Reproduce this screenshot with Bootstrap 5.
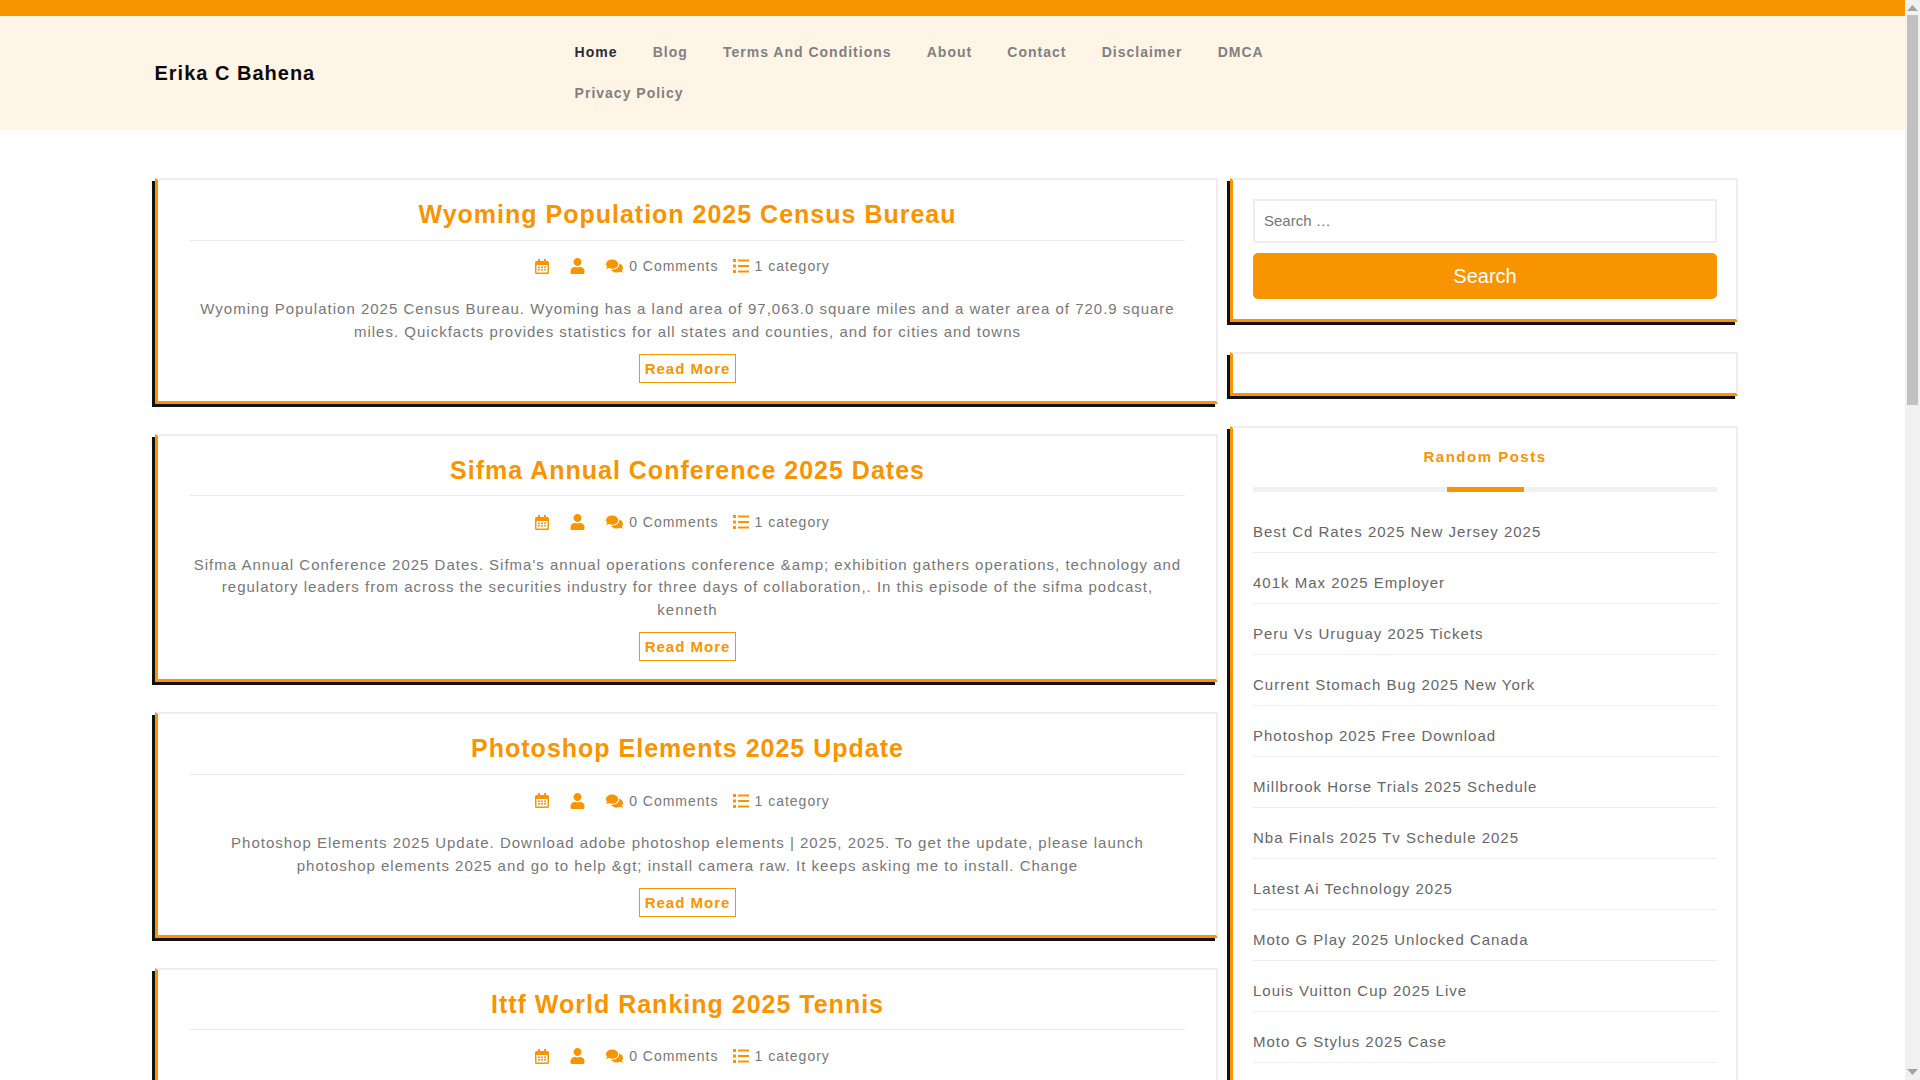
<!DOCTYPE html>
<html lang="en">
<head>
<meta charset="utf-8">
<title>Erika C Bahena</title>
<link rel="stylesheet" href="https://cdn.jsdelivr.net/npm/bootstrap@5.3.0/dist/css/bootstrap.min.css">
<style>
body{font-family:"Liberation Sans",Arial,sans-serif;font-size:15px;letter-spacing:1px;color:#777;background:#fff;line-height:1.5}
.topstrip{height:16px;background:#f79400}
.headband{background:#fef5e7;height:114px;padding-left:154.5px}
.sitename{width:402.5px;font-size:20px;font-weight:700;color:#0b0b0b;letter-spacing:1px}
.sitenav{width:800px}
.sitenav a{display:block;padding:0 17.6px;line-height:41px;font-size:14px;font-weight:700;color:#808080;text-decoration:none}
.sitenav a.now{color:#2b2b3a}
.pagewrap{padding:48px 182px 0 152px;gap:9px}
.maincol{width:1066px;flex:none}
.sidecol{flex:1 1 auto;min-width:0}
.boxed{position:relative;margin-left:3px;margin-bottom:30px;background:#fff;border:2px solid #eee;border-left:3px solid #f79400;border-bottom:3px solid #f79400;box-shadow:-3px 3px 0 #111}
.postbox{padding:16px 31px 18px 32px;text-align:center}
.posttitle{margin:0;padding-bottom:6.8px;border-bottom:1px solid #e9e9e9;font-size:25px;line-height:36.8px;font-weight:700;color:#f79400;letter-spacing:1px}
.metaline{margin-top:14.9px;padding-right:10px;height:22px;font-size:14px;line-height:22px;color:#777}
.metaline svg{display:block;fill:#f79400;flex:none}
.metaline .spread{margin-left:21px}
.metaline .tight{margin-left:6px}
.metaline .wide{margin-left:15px}
.metaline .wide + .tight{margin-left:5px}
.postcopy{margin:20.6px 0 0;line-height:22.5px}
.readbtn{display:inline-block;vertical-align:top;margin-top:10.7px;height:29px;line-height:27px;padding:0 5px;border:1px solid #f79400;color:#f79400;font-weight:700;text-decoration:none}
.searchbox{padding:19px 19px 20px 20px;margin-bottom:30px}
.searchfield{display:block;width:100%;height:44px;border:2px solid #eee;padding:0 9px 2px;font:15px "Liberation Sans",Arial,sans-serif;letter-spacing:0;color:#777;background:#fff;border-radius:0}
.searchfield::placeholder{color:#757575;opacity:1}
.searchgo{display:block;width:100%;height:46px;margin-top:10px;border:0;border-radius:5px;background:#f79400;color:#fff;font-size:20px;letter-spacing:0}
.emptybox{height:44px}
.listbox{padding:0 19px 30px 20px}
.sidehead{margin:0;padding-top:17px;text-align:center;font-size:15px;line-height:24px;font-weight:700;color:#f79400;letter-spacing:1.5px}
.headbar{height:5px;margin-top:18px;background:#f1f1f1}
.headbar span{display:block;width:77px;height:5px;margin:0 auto;background:#f79400}
.postlinks{list-style:none;margin:10px 0 0;padding:0}
.postlinks li{height:51px;padding-top:18px;border-bottom:1px solid #eee;line-height:24px;color:#666}
.postlinks a{color:inherit;text-decoration:none}
.fakebar{position:fixed;top:0;right:0;bottom:0;width:15px;background:#f1f1f1;z-index:10}
.fakebar .thumbbar{position:absolute;top:15px;left:2px;width:11px;height:390px;background:#c1c1c1}
.fakebar svg{position:absolute;left:2px;width:11px;height:6px;fill:#a3a3a3}
.fakebar .arrowup{top:5px}
.fakebar .arrowdown{bottom:5px}
</style>
</head>
<body>
<svg width="0" height="0" class="position-absolute" aria-hidden="true">
  <symbol id="ic-cal" viewBox="0 0 14 15"><path fill-rule="evenodd" d="M3 0h2v2h4V0h2v2h1.500A1.500 1.500 0 0 1 14 3.500V13.500A1.500 1.500 0 0 1 12.500 15h-11A1.500 1.500 0 0 1 0 13.500V3.500A1.500 1.500 0 0 1 1.500 2H3zM1.500 6v7.500h11V6zM3 7.500h2v1.500H3zM6 7.500h2v1.500H6zM9 7.500h2v1.500H9zM3 10h2v1.500H3zM6 10h2v1.500H6zM9 10h2v1.500H9z"/></symbol>
  <symbol id="ic-user" viewBox="0 0 448 512"><path d="M224 256c70.700 0 128-57.300 128-128S294.700 0 224 0 96 57.300 96 128s57.300 128 128 128zm89.600 32h-16.700c-22.200 10.200-46.900 16-72.900 16s-50.600-5.800-72.900-16h-16.700C60.200 288 0 348.200 0 422.400V464c0 26.500 21.500 48 48 48h352c26.500 0 48-21.500 48-48v-41.600c0-74.200-60.200-134.400-134.400-134.400z"/></symbol>
  <symbol id="ic-chat" viewBox="0 0 576 512"><path d="M416 192c0-88.400-93.100-160-208-160S0 103.600 0 192c0 34.300 14.100 65.900 38 92-13.400 30.200-35.500 54.200-35.800 54.500-2.200 2.300-2.800 5.700-1.500 8.700S4.800 352 8 352c36.600 0 66.900-12.300 88.700-25 32.200 15.700 70.300 25 111.300 25 114.900 0 208-71.600 208-160zm122 220c23.900-26 38-57.700 38-92 0-66.900-53.500-124.200-129.300-148.100.9 6.600 1.300 13.300 1.300 20.100 0 105.900-107.700 192-240 192-10.800 0-21.300-.8-31.700-1.900C207.800 439.600 281.800 480 368 480c41 0 79.100-9.200 111.300-25 21.800 12.700 52.100 25 88.700 25 3.200 0 6.100-1.900 7.300-4.800 1.300-2.900.7-6.300-1.500-8.700-.3-.3-22.400-24.200-35.800-54.500z"/></symbol>
  <symbol id="ic-list" viewBox="0 0 16 14"><path d="M0 0h3v3H0zM5 .5h11v2H5zM0 5.500h3v3H0zM5 6h11v2H5zM0 11h3v3H0zM5 11.500h11v2H5z"/></symbol>
</svg>
<div class="topstrip"></div>
<header class="headband d-flex align-items-center">
  <div class="sitename">Erika C Bahena</div>
  <nav class="sitenav d-flex flex-wrap">
    <a class="now" href="#">Home</a><a href="#">Blog</a><a href="#">Terms And Conditions</a><a href="#">About</a><a href="#">Contact</a><a href="#">Disclaimer</a><a href="#">DMCA</a><a href="#">Privacy Policy</a>
  </nav>
</header>
<div class="pagewrap d-flex align-items-start">
  <main class="maincol">

    <article class="boxed postbox">
      <h2 class="posttitle">Wyoming Population 2025 Census Bureau</h2>
      <div class="metaline d-flex justify-content-center align-items-center">
        <svg width="14" height="15"><use href="#ic-cal"/></svg>
        <svg class="spread" width="15" height="16"><use href="#ic-user"/></svg>
        <svg class="spread" width="17" height="16"><use href="#ic-chat"/></svg>
        <span class="tight">0 Comments</span>
        <svg class="wide" width="16" height="14"><use href="#ic-list"/></svg>
        <span class="tight">1 category</span>
      </div>
      <p class="postcopy">Wyoming Population 2025 Census Bureau. Wyoming has a land area of 97,063.0 square miles and a water area of 720.9 square miles. Quickfacts provides statistics for all states and counties, and for cities and towns</p>
      <a class="readbtn" href="#">Read More</a>
    </article>

    <article class="boxed postbox">
      <h2 class="posttitle">Sifma Annual Conference 2025 Dates</h2>
      <div class="metaline d-flex justify-content-center align-items-center">
        <svg width="14" height="15"><use href="#ic-cal"/></svg>
        <svg class="spread" width="15" height="16"><use href="#ic-user"/></svg>
        <svg class="spread" width="17" height="16"><use href="#ic-chat"/></svg>
        <span class="tight">0 Comments</span>
        <svg class="wide" width="16" height="14"><use href="#ic-list"/></svg>
        <span class="tight">1 category</span>
      </div>
      <p class="postcopy">Sifma Annual Conference 2025 Dates. Sifma's annual operations conference &amp;amp; exhibition gathers operations, technology and regulatory leaders from across the securities industry for three days of collaboration,. In this episode of the sifma podcast, kenneth</p>
      <a class="readbtn" href="#">Read More</a>
    </article>

    <article class="boxed postbox">
      <h2 class="posttitle">Photoshop Elements 2025 Update</h2>
      <div class="metaline d-flex justify-content-center align-items-center">
        <svg width="14" height="15"><use href="#ic-cal"/></svg>
        <svg class="spread" width="15" height="16"><use href="#ic-user"/></svg>
        <svg class="spread" width="17" height="16"><use href="#ic-chat"/></svg>
        <span class="tight">0 Comments</span>
        <svg class="wide" width="16" height="14"><use href="#ic-list"/></svg>
        <span class="tight">1 category</span>
      </div>
      <p class="postcopy">Photoshop Elements 2025 Update. Download adobe photoshop elements | 2025, 2025. To get the update, please launch photoshop elements 2025 and go to help &amp;gt; install camera raw. It keeps asking me to install. Change</p>
      <a class="readbtn" href="#">Read More</a>
    </article>

    <article class="boxed postbox">
      <h2 class="posttitle">Ittf World Ranking 2025 Tennis</h2>
      <div class="metaline d-flex justify-content-center align-items-center">
        <svg width="14" height="15"><use href="#ic-cal"/></svg>
        <svg class="spread" width="15" height="16"><use href="#ic-user"/></svg>
        <svg class="spread" width="17" height="16"><use href="#ic-chat"/></svg>
        <span class="tight">0 Comments</span>
        <svg class="wide" width="16" height="14"><use href="#ic-list"/></svg>
        <span class="tight">1 category</span>
      </div>
    </article>
  </main>

  <aside class="sidecol">
    <div class="boxed searchbox">
      <input class="searchfield" type="search" placeholder="Search …">
      <button class="searchgo" type="button">Search</button>
    </div>
    <div class="boxed emptybox"></div>
    <div class="boxed listbox">
      <h3 class="sidehead">Random Posts</h3>
      <div class="headbar"><span></span></div>
      <ul class="postlinks">
        <li><a href="#">Best Cd Rates 2025 New Jersey 2025</a></li>
        <li><a href="#">401k Max 2025 Employer</a></li>
        <li><a href="#">Peru Vs Uruguay 2025 Tickets</a></li>
        <li><a href="#">Current Stomach Bug 2025 New York</a></li>
        <li><a href="#">Photoshop 2025 Free Download</a></li>
        <li><a href="#">Millbrook Horse Trials 2025 Schedule</a></li>
        <li><a href="#">Nba Finals 2025 Tv Schedule 2025</a></li>
        <li><a href="#">Latest Ai Technology 2025</a></li>
        <li><a href="#">Moto G Play 2025 Unlocked Canada</a></li>
        <li><a href="#">Louis Vuitton Cup 2025 Live</a></li>
        <li><a href="#">Moto G Stylus 2025 Case</a></li>
      </ul>
    </div>
  </aside>
</div>
<div class="fakebar" aria-hidden="true">
  <svg class="arrowup" viewBox="0 0 11 6"><path d="M5.500 0L11 6H0z"/></svg>
  <div class="thumbbar"></div>
  <svg class="arrowdown" viewBox="0 0 11 6"><path d="M5.500 6L11 0H0z"/></svg>
</div>
<script src="https://cdn.jsdelivr.net/npm/bootstrap@5.3.0/dist/js/bootstrap.bundle.min.js"></script>
</body>
</html>
